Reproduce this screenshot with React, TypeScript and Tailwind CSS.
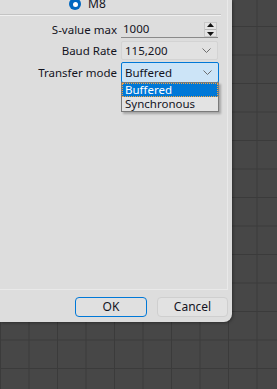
import React from "react";

function Chevron() {
  return (
    <svg width="9" height="5" viewBox="0 0 9 5" className="block">
      <path d="M0.5 0.5 L4.5 4.5 L8.5 0.5" fill="none" stroke="#6d6d6d" strokeWidth="1" />
    </svg>
  );
}

export default function App() {
  return (
    <div
      className="relative w-[277px] h-[389px] overflow-hidden bg-[#474747]"
      style={{ fontFamily: '"Noto Sans", "Open Sans", sans-serif' }}
    >
      <div
        className="absolute inset-0"
        style={{
          backgroundImage:
            "linear-gradient(to right, #3b3b3b 1px, transparent 1px), linear-gradient(to bottom, #3b3b3b 1px, transparent 1px)",
          backgroundSize: "28.5px 28.5px",
          backgroundPosition: "0px -2.5px",
        }}
      />
      {/* dialog */}
      <div className="relative w-[232px] h-[322px] bg-[#dddddd] rounded-br-[8px] flex flex-col shadow-[1px_1px_3px_rgba(0,0,0,0.35)]">
        {/* group box */}
        <div className="relative w-[228px] h-[290px] border-r border-b border-[#e9e9e9] text-[11.5px] text-[#14141e]">
          {/* radio row */}
          <div className="h-[16px] flex items-start pl-[69px] -mt-[2px]">
            <div className="flex items-center gap-[7px]">
              <div className="w-[12px] h-[12px] rounded-full bg-[#0067c0] flex items-center justify-center">
                <div className="w-[5px] h-[5px] rounded-full bg-white" />
              </div>
              <span className="leading-[12px] text-[12px]">M8</span>
            </div>
          </div>
          <div className="h-px bg-[#c4c4c4] mr-[6px]" />
          <div className="h-px bg-[#f0f0f0] mr-[6px]" />
          {/* form */}
          <div className="flex flex-col mt-[5px]">
            <div className="flex items-center h-[17px]">
              <div className="w-[118px] text-right pr-[1px]">S-value max</div>
              <div className="ml-[3px] w-[97px] h-[17px] border-b border-[#8a8a8a] flex items-center justify-between pl-[2px]">
                <span>1000</span>
                <div className="w-[13px] h-[15px] border border-[#c8c8c8] flex flex-col items-center justify-center bg-[#e4e4e4] mr-[1px]">
                  <svg width="7" height="4" viewBox="0 0 7 4" className="block mb-[2px]"><path d="M0 4 L3.5 0 L7 4 Z" fill="#111" /></svg>
                  <div className="w-[11px] h-px bg-[#b5b5b5]" />
                  <svg width="7" height="4" viewBox="0 0 7 4" className="block mt-[2px]"><path d="M0 0 L3.5 4 L7 0 Z" fill="#111" /></svg>
                </div>
              </div>
            </div>
            <div className="flex items-center h-[19px] mt-[3px]">
              <div className="w-[118px] text-right pr-[1px]">Baud Rate</div>
              <div className="ml-[3px] w-[97px] h-[19px] border border-[#d3d3d3] bg-[#e1e1e1] rounded-[2px] flex items-center justify-between pl-[3px] pr-[6px]">
                <span>115,200</span>
                <Chevron />
              </div>
            </div>
            <div className="flex items-center h-[21px] mt-[2px]">
              <div className="w-[118px] text-right pr-[1px]">Transfer mode</div>
              <div className="relative ml-[3px] w-[98px] h-[21px] border border-[#0078d7] bg-[#cce4f7] rounded-[2px] flex items-center justify-between pl-[3px] pr-[6px]">
                <span>Buffered</span>
                <Chevron />
                {/* dropdown list */}
                <div className="absolute left-[-1px] top-[19px] w-[98px] border border-[#7a7a7a] bg-[#e3e3e3] shadow-[2px_2px_2px_rgba(0,0,0,0.25)] z-10">
                  <div className="h-[14px] bg-[#0078d7] text-white border border-dotted border-[#f4a340] flex items-center pl-[2px] leading-none">Buffered</div>
                  <div className="h-[14px] flex items-center pl-[3px] leading-none">Synchronous</div>
                </div>
              </div>
            </div>
          </div>
        </div>
        {/* buttons */}
        <div className="flex gap-[10px] pl-[75px] mt-[7px] text-[12px] text-[#14141e]">
          <button className="w-[72px] h-[20px] border border-[#0078d7] rounded-[4px] bg-[#e0e0e0] flex items-center justify-center">OK</button>
          <button className="w-[71px] h-[20px] border border-[#cfcfcf] rounded-[4px] bg-[#e2e2e2] flex items-center justify-center">Cancel</button>
        </div>
      </div>
    </div>
  );
}
